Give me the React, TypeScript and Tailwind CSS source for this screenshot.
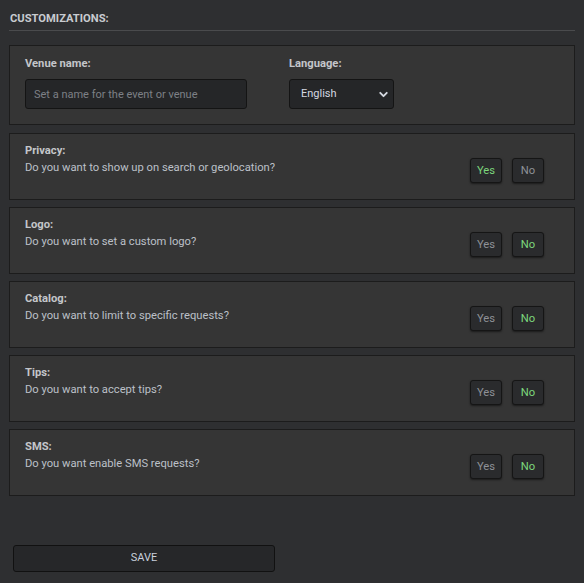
import { ChevronDown } from "lucide-react";

type Toggle = {
  title: string;
  question: string;
  value: boolean;
};

const toggles: Toggle[] = [
  { title: "Privacy:", question: "Do you want to show up on search or geolocation?", value: true },
  { title: "Logo:", question: "Do you want to set a custom logo?", value: false },
  { title: "Catalog:", question: "Do you want to limit to specific requests?", value: false },
  { title: "Tips:", question: "Do you want to accept tips?", value: false },
  { title: "SMS:", question: "Do you want enable SMS requests?", value: false },
];

function ChoiceButton({ label, active }: { label: string; active: boolean }) {
  return (
    <button
      className={`w-[32px] h-[25px] rounded-[3px] border border-[#151515] bg-[#2a2b2d] shadow-[0_1px_2px_rgba(0,0,0,0.5)] text-[11.2px] leading-none ${
        active ? "text-[#7cd67c]" : "text-[#8e9197]"
      }`}
    >
      {label}
    </button>
  );
}

function ToggleCard({ item }: { item: Toggle }) {
  return (
    <div className="h-[66.5px] border border-[#1c1c1c] bg-[#353535] pl-[15px] pr-[30px] pt-[10px] flex justify-between">
      <div className="flex flex-col">
        <span className="text-[11.2px] leading-[13px] font-bold text-[#c4c6ca]">{item.title}</span>
        <span className="text-[11.2px] leading-[13px] mt-[3.5px] text-[#bcc0c8]">{item.question}</span>
      </div>
      <div className="flex gap-[10px] mt-[14px] h-[25px]">
        <ChoiceButton label="Yes" active={item.value} />
        <ChoiceButton label="No" active={!item.value} />
      </div>
    </div>
  );
}

export default function App() {
  return (
    <div className="w-[584px] h-[583px] bg-[#2e2f31] px-[9px] pt-[12px] font-['Roboto',sans-serif]">
      <div className="pl-[1px] text-[11.2px] leading-[13px] font-bold text-[#c8cbd0]">CUSTOMIZATIONS:</div>
      <div className="mt-[5px] h-px bg-[#4a4b4d]" />

      <div className="mt-[14px] h-[80px] border border-[#1c1c1c] bg-[#353535] px-[15px] pt-[10.5px] flex">
        <div className="w-[264px] flex flex-col">
          <span className="text-[11.2px] leading-[13px] font-bold text-[#c4c6ca]">Venue name:</span>
          <input
            placeholder="Set a name for the event or venue"
            className="mt-[9.5px] w-[222px] h-[30px] rounded-[3px] border border-[#141414] bg-[#252628] px-[8px] text-[11px] text-[#d0d4dc] placeholder:text-[#7d8086] outline-none"
          />
        </div>
        <div className="flex flex-col">
          <span className="text-[11.2px] leading-[13px] font-bold text-[#c4c6ca]">Language:</span>
          <div className="mt-[9.5px] w-[105px] h-[30px] rounded-[3px] border border-[#141414] bg-[#252628] pl-[11px] pr-[3px] flex items-center justify-between">
            <span className="text-[11px] text-[#d4d8e0]">English</span>
            <ChevronDown className="w-[13px] h-[13px] text-[#d4d8e0]" strokeWidth={3.5} />
          </div>
        </div>
      </div>

      <div className="mt-[8px] flex flex-col gap-[7.5px]">
        {toggles.map((item) => (
          <ToggleCard key={item.title} item={item} />
        ))}
      </div>

      <button className="mt-[49px] ml-[4px] w-[262px] h-[27px] rounded-[3px] border border-[#111111] bg-[#262729] text-[11px] text-[#c8d0dc]">
        SAVE
      </button>
    </div>
  );
}
